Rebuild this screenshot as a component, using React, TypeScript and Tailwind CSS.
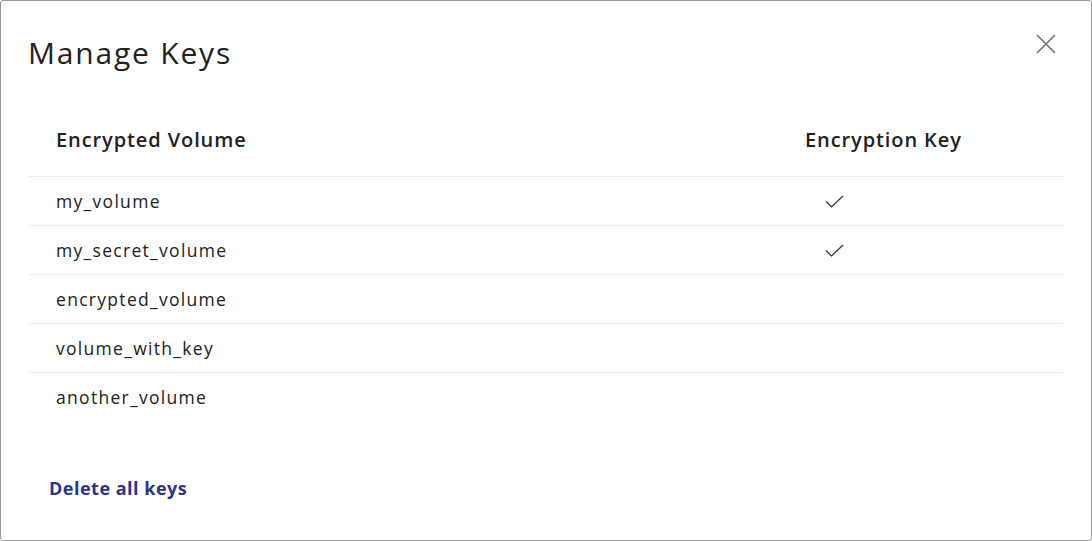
const volumes = [
  { name: "my_volume", hasKey: true },
  { name: "my_secret_volume", hasKey: true },
  { name: "encrypted_volume", hasKey: false },
  { name: "volume_with_key", hasKey: false },
  { name: "another_volume", hasKey: false },
];

function Check() {
  return (
    <svg width="19" height="13" viewBox="0 0 19 13" fill="none" className="text-[#333]">
      <path d="M1 6.5 L6.5 12 L18 1" stroke="currentColor" strokeWidth="1.2" />
    </svg>
  );
}

function Close() {
  return (
    <svg width="20" height="20" viewBox="0 0 20 20" fill="none" className="text-[#6b6b6b]">
      <path d="M1 1 L19 19 M19 1 L1 19" stroke="currentColor" strokeWidth="1.5" />
    </svg>
  );
}

export default function App() {
  return (
    <div
      className="w-[1092px] h-[541px] bg-white border border-[#9a9a9a] rounded-[3px] text-[#222] flex flex-col"
      style={{ fontFamily: "'Open Sans', 'Noto Sans', sans-serif" }}
    >
      {/* Header */}
      <div className="flex items-start justify-between pl-[27px] pr-[35px] pt-[32px]">
        <h1 className="text-[30px] leading-[40px] font-normal tracking-[1.8px]">Manage Keys</h1>
        <button className="mt-[1px]">
          <Close />
        </button>
      </div>

      {/* Table */}
      <div className="mx-[28px] mt-[32px]">
        <div className="flex items-center h-[72px] pb-[2px] border-b border-[#ececec] text-[20px] font-semibold tracking-[0.9px]">
          <div className="w-[749px] pl-[27px]">Encrypted Volume</div>
          <div className="flex-1 pl-[27px]">Encryption Key</div>
        </div>
        {volumes.map((v, i) => (
          <div
            key={v.name}
            className={`flex items-center h-[49px] text-[17.5px] tracking-[1.3px] ${i < volumes.length - 1 ? "border-b border-[#ececec]" : ""}`}
          >
            <div className="w-[749px] pl-[27px]">{v.name}</div>
            <div className="flex-1 pl-[47px] flex items-center">{v.hasKey && <Check />}</div>
          </div>
        ))}
      </div>

      {/* Footer */}
      <div className="pl-[48px] mt-[53px]">
        <button className="text-[18px] font-bold tracking-[0.5px] text-[#2b3491]">Delete all keys</button>
      </div>
    </div>
  );
}
